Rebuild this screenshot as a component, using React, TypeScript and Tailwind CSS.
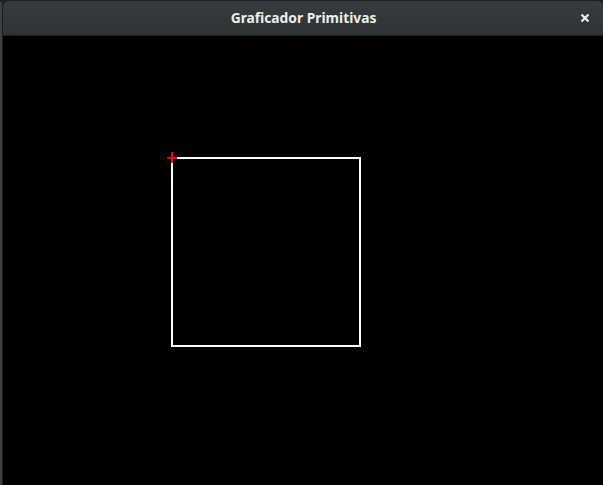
import React from "react";

export default function App() {
  return (
    <div className="w-[603px] h-[485px] bg-[#1e2122] flex overflow-hidden" style={{ fontFamily: '"Noto Sans", "Open Sans", sans-serif' }}>
      <div className="w-[2px] bg-[#3a3f40] mt-[2px]" />
      <div className="flex-1 flex flex-col border-l border-[#1b1d1e] mt-[1px]">
        <div className="h-[35px] rounded-t-[6px] bg-gradient-to-b from-[#363c3d] to-[#2e3435] border-b border-[#1c1f20] flex items-center relative">
          <div className="flex-1 text-center text-[13.8px] font-bold text-[#eeeeec] pl-[1px]">Graficador Primitivas</div>
          <div className="absolute right-[12px] top-[11px] w-[12px] h-[12px] flex items-center justify-center">
            <svg width="10" height="10" viewBox="0 0 10 10">
              <path d="M1.5 1.5 L8.5 8.5 M8.5 1.5 L1.5 8.5" stroke="#eeeeec" strokeWidth="2.2" strokeLinecap="butt" />
            </svg>
          </div>
        </div>
        <div className="flex-1 bg-black relative">
          <div className="absolute left-[168px] top-[121px] w-[190px] h-[190px] border-2 border-white" />
          <div className="absolute left-[164px] top-[121px] w-[10px] h-[2px] bg-[#ff0000]" />
          <div className="absolute left-[168px] top-[116px] w-[2px] h-[11px] bg-[#ff0000]" />
        </div>
      </div>
    </div>
  );
}
